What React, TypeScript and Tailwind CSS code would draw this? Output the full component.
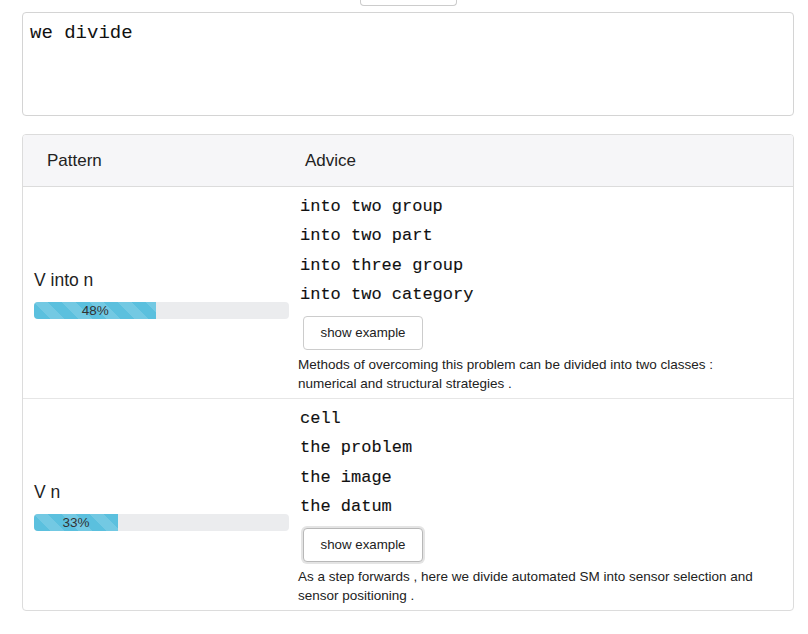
import React from "react";

type Row = {
  pattern: string;
  percent: number;
  advice: string[];
  example: string;
  focused?: boolean;
};

const rows: Row[] = [
  {
    pattern: "V into n",
    percent: 48,
    advice: ["into two group", "into two part", "into three group", "into two category"],
    example:
      "Methods of overcoming this problem can be divided into two classes : numerical and structural strategies .",
  },
  {
    pattern: "V n",
    percent: 33,
    advice: ["cell", "the problem", "the image", "the datum"],
    example:
      "As a step forwards , here we divide automated SM into sensor selection and sensor positioning .",
    focused: true,
  },
];

const ProgressBar: React.FC<{ percent: number }> = ({ percent }) => (
  <div className="h-[17px] w-[255px] overflow-hidden rounded-[4px] bg-[#ebecee]">
    <div
      className="flex h-full items-center justify-center bg-[#5bc0de] bg-[linear-gradient(45deg,rgba(255,255,255,.15)_25%,transparent_25%,transparent_50%,rgba(255,255,255,.15)_50%,rgba(255,255,255,.15)_75%,transparent_75%,transparent)] bg-[length:28px_28px] text-[13.5px] leading-none text-[#333]"
      style={{ width: `${percent}%` }}
    >
      {percent}%
    </div>
  </div>
);

const ResultRow: React.FC<{ row: Row; last?: boolean }> = ({ row, last }) => (
  <div className={`flex ${last ? "" : "border-b border-[#e6e6e6]"}`}>
    <div className="flex w-[275px] shrink-0 flex-col justify-center pl-[11px] pt-[2px]">
      <div className="mb-[10px] text-[17.5px] leading-[24px] text-[#222]">{row.pattern}</div>
      <ProgressBar percent={row.percent} />
    </div>
    <div className="flex-1 pb-[5px] pt-[5px]">
      {row.advice.map((a) => (
        <div
          key={a}
          className="pl-[2px] font-['Liberation_Mono',monospace] text-[17px] leading-[29.3px] text-[#111] [-webkit-text-stroke:0.12px_#111]"
        >
          {a}
        </div>
      ))}
      <button
        className={`ml-[5px] mt-[7px] h-[34px] w-[120px] rounded-[4px] border bg-white text-[13.3px] text-[#222] ${
          row.focused
            ? "border-[#b8b8b8] shadow-[0_0_0_2px_#e4e4e4]"
            : "border-[#cccccc]"
        }`}
      >
        show example
      </button>
      <p className="mt-[5px] pr-[30px] text-[13.5px] leading-[19px] text-[#222]">{row.example}</p>
    </div>
  </div>
);

export default function App() {
  return (
    <div className="min-h-[634px] bg-white pl-[22px] pr-[14px] font-['Liberation_Sans',Arial,sans-serif]">
      <div className="ml-[338px] h-[6px] w-[97px] rounded-b-[4px] border border-t-0 border-[#cccccc]" />
      <textarea
        className="mt-[6px] block h-[104px] w-full resize-none rounded-[4px] border border-[#d4d4d4] px-[7px] py-[9px] font-['Liberation_Mono',monospace] text-[19px] leading-[22px] text-[#111] outline-none"
        defaultValue="we divide"
      />
      <div className="mt-[18px] overflow-hidden rounded-[4px] border border-[#dcdcdc]">
        <div className="flex h-[52px] items-center border-b border-[#dcdcdc] bg-[#f6f6f8] text-[17px] text-[#222]">
          <div className="w-[282px] pl-[24px]">Pattern</div>
          <div>Advice</div>
        </div>
        {rows.map((r, i) => (
          <ResultRow key={r.pattern} row={r} last={i === rows.length - 1} />
        ))}
      </div>
    </div>
  );
}
